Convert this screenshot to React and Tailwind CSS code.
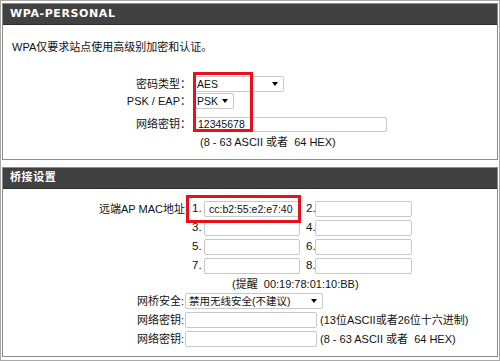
import React from 'react';

const font = { fontFamily: "'Liberation Sans', 'Noto Sans CJK SC', sans-serif" };

function Select({ value, width }) {
  return (
    <div className={`flex items-center justify-between h-[16px] ${width} border border-[#c8c8c8] rounded-[2px] bg-white pl-[3px] pr-[5px] shrink-0`}>
      <span className="text-[10.5px] leading-none whitespace-nowrap">{value}</span>
      <span className="w-0 h-0 border-l-[3.5px] border-r-[3.5px] border-t-[4px] border-l-transparent border-r-transparent border-t-black" />
    </div>
  );
}

function Field({ value = '', width, height = 'h-[16px]' }) {
  return (
    <div className={`flex items-center ${height} ${width} border border-[#c8c8c8] rounded-[2px] bg-white pl-[4px] shrink-0`}>
      <span className="text-[10.5px] leading-none whitespace-nowrap">{value}</span>
    </div>
  );
}

function Header({ title }) {
  return (
    <div className="h-[21px] bg-[#414141] border-b border-[#2c2c2c] flex items-center pl-[7px]">
      <span className="text-white text-[11px] font-bold tracking-[0.6px] whitespace-nowrap" style={{ fontFamily: "'DejaVu Sans', 'Noto Sans CJK SC', sans-serif" }}>{title}</span>
    </div>
  );
}

function MacRow({ label = '', left, right, leftValue }) {
  return (
    <div className="flex items-center h-[16px]">
      <span className="w-[184px] pr-[2px] text-right text-[11px] whitespace-nowrap shrink-0">{label}</span>
      <span className="w-[12px] ml-[5px] text-[11.5px] whitespace-nowrap shrink-0">{left}.</span>
      <Field width="w-[96px]" value={leftValue} />
      <span className="w-[9px] ml-[6px] text-[11.5px] whitespace-nowrap shrink-0">{right}.</span>
      <Field width="w-[97px]" />
    </div>
  );
}

export default function App() {
  return (
    <div className="relative w-[500px] h-[361px] bg-white border border-[#a9a9a9] pt-[2px] px-px text-[#111] overflow-hidden" style={font}>
      {/* WPA panel */}
      <div className="h-[157px] border border-[#8c8c8c]">
        <Header title="WPA-PERSONAL" />
        <p className="mt-[15px] ml-[9px] text-[11px] leading-[14px]">WPA仅要求站点使用高级别加密和认证。</p>

        <div className="mt-[22px] flex flex-col">
          <div className="flex items-center h-[16px]">
            <span className="w-[190px] text-right text-[11px] pr-[2px] whitespace-nowrap">密码类型：</span>
            <Select value="AES" width="w-[91px]" />
          </div>
          <div className="flex items-center h-[16px] mt-[1px]">
            <span className="w-[190px] text-right text-[11px] pr-[2px] whitespace-nowrap">PSK / EAP：</span>
            <Select value="PSK" width="w-[41px]" />
          </div>
          <div className="flex items-center h-[16px] mt-[7px]">
            <span className="w-[190px] text-right text-[11px] pr-[2px] whitespace-nowrap">网络密钥：</span>
            <Field value="12345678" width="w-[194px]" height="h-[15px]" />
          </div>
          <p className="mt-[3px] ml-[197px] text-[11px] leading-[14px] whitespace-nowrap">(8 - 63 ASCII 或者&nbsp; 64 HEX)</p>
        </div>
      </div>

      {/* bridge panel */}
      <div className="mt-[7px] h-[190px] border border-[#8c8c8c]">
        <Header title="桥接设置" />
        <div className="mt-[12px] flex flex-col gap-[3px]">
          <MacRow label="远端AP MAC地址" left="1" right="2" leftValue="cc:b2:55:e2:e7:40" />
          <MacRow left="3" right="4" />
          <MacRow left="5" right="6" />
          <MacRow left="7" right="8" />
        </div>
        <p className="mt-[3px] ml-[229px] text-[11px] leading-[14px] whitespace-nowrap">(提醒&nbsp; 00:19:78:01:10:BB)</p>

        <div className="mt-[2px] flex flex-col gap-[3px]">
          <div className="flex items-center h-[16px]">
            <span className="w-[182px] text-right text-[11px] pr-[1px] whitespace-nowrap">网桥安全:</span>
            <Select value="禁用无线安全(不建议)" width="w-[138px]" />
          </div>
          <div className="flex items-center h-[16px]">
            <span className="w-[182px] text-right text-[11px] pr-[1px] whitespace-nowrap">网络密钥:</span>
            <Field width="w-[132px]" />
            <span className="ml-[3px] text-[11px] whitespace-nowrap">(13位ASCII或者26位十六进制)</span>
          </div>
          <div className="flex items-center h-[16px]">
            <span className="w-[182px] text-right text-[11px] pr-[1px] whitespace-nowrap">网络密钥:</span>
            <Field width="w-[132px]" />
            <span className="ml-[3px] text-[11px] whitespace-nowrap">(8 - 63 ASCII 或者&nbsp; 64 HEX)</span>
          </div>
        </div>
      </div>

      {/* red highlight annotations */}
      <div className="absolute left-[192px] top-[71px] w-[60px] h-[60px] border-[3px] border-[#e8101c] pointer-events-none" />
      <div className="absolute left-[185px] top-[194px] w-[115px] h-[28px] border-[3px] border-[#e8101c] pointer-events-none" />
    </div>
  );
}
